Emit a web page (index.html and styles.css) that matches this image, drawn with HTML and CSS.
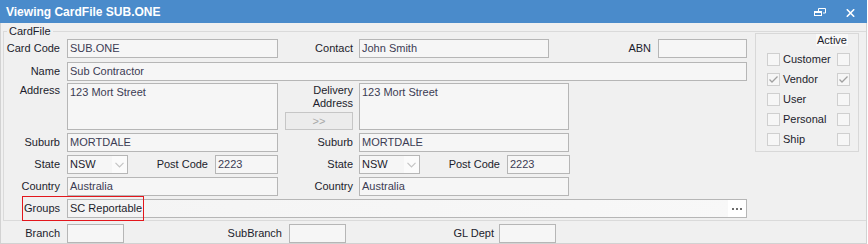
FILE: index.html
```html
<!DOCTYPE html>
<html lang="en">
<head>
  <meta charset="UTF-8" />
  <title>Viewing CardFile SUB.ONE</title>
  <link rel="stylesheet" href="styles.css">
</head>
<body>
  <div class="window">
    <!-- Title bar -->
    <div class="titlebar">
      <span class="title">Viewing CardFile SUB.ONE</span>
      <span class="tb-btn restore">
        <svg width="12" height="8" viewBox="0 0 12 8"><path d="M4.5 0.5h7v4.5h-2.5M4.5 0.5v3" fill="none" stroke="#fff"/><rect x="0.5" y="3.5" width="7" height="4" fill="none" stroke="#fff"/><path d="M0.5 4.5h7" stroke="#fff"/></svg>
      </span>
      <span class="tb-btn close">
        <svg width="9" height="8" viewBox="0 0 9 8"><path d="M0.8 0.3L8.2 7.7M8.2 0.3L0.8 7.7" stroke="#fff" stroke-width="1.6"/></svg>
      </span>
    </div>

    <!-- CardFile group -->
    <fieldset class="cardfile">
      <legend>CardFile</legend>
      <div class="cardfile-body">
        <div class="form">
          <div class="row r1">
            <label class="lbl">Card Code</label>
            <div class="field w-left">SUB.ONE</div>
            <label class="lbl lbl2">Contact</label>
            <div class="field w-contact">John Smith</div>
            <label class="lbl lbl-abn">ABN</label>
            <div class="field w-abn"></div>
          </div>
          <div class="row r2">
            <label class="lbl">Name</label>
            <div class="field w-full">Sub Contractor</div>
          </div>
          <div class="row r3">
            <label class="lbl lbl-top">Address</label>
            <div class="field memo w-left">123 Mort Street</div>
            <div class="mid">
              <label class="lbl-del">Delivery<br>Address</label>
              <button class="copy-btn">&gt;&gt;</button>
            </div>
            <div class="field memo w-right">123 Mort Street</div>
          </div>
          <div class="row r4">
            <label class="lbl">Suburb</label>
            <div class="field w-left">MORTDALE</div>
            <label class="lbl lbl2">Suburb</label>
            <div class="field w-right">MORTDALE</div>
          </div>
          <div class="row r4">
            <label class="lbl">State</label>
            <div class="field select">
              <span class="sel-text">NSW</span>
              <span class="sel-arrow"><svg width="9" height="6" viewBox="0 0 9 6"><path d="M0.5 0.8L4.5 4.8L8.5 0.8" fill="none" stroke="#c4c4c4" stroke-width="1.2"/></svg></span>
            </div>
            <label class="lbl lbl-pc">Post Code</label>
            <div class="field w-pc">2223</div>
            <label class="lbl lbl2">State</label>
            <div class="field select">
              <span class="sel-text">NSW</span>
              <span class="sel-arrow"><svg width="9" height="6" viewBox="0 0 9 6"><path d="M0.5 0.8L4.5 4.8L8.5 0.8" fill="none" stroke="#c4c4c4" stroke-width="1.2"/></svg></span>
            </div>
            <label class="lbl lbl-pc">Post Code</label>
            <div class="field w-pc">2223</div>
          </div>
          <div class="row r4">
            <label class="lbl">Country</label>
            <div class="field w-left">Australia</div>
            <label class="lbl lbl2">Country</label>
            <div class="field w-right">Australia</div>
          </div>
          <div class="row r4 groups-row">
            <label class="lbl">Groups</label>
            <div class="field w-full groups">
              <span>SC Reportable</span>
              <span class="ellipsis"><i></i><i></i><i></i></span>
            </div>
            <div class="highlight"></div>
          </div>
        </div>

        <div class="active">
          <div class="active-title"><span>Active</span></div>
          <div class="chk-row"><span class="chk"></span><span class="chk-lbl">Customer</span><span class="chk right"></span></div>
          <div class="chk-row"><span class="chk on"><svg width="11" height="11" viewBox="0 0 11 11"><path d="M1.5 5.5L4 8L9.5 2.5" fill="none" stroke="#a0a0a0" stroke-width="1.3"/></svg></span><span class="chk-lbl">Vendor</span><span class="chk right on"><svg width="11" height="11" viewBox="0 0 11 11"><path d="M1.5 5.5L4 8L9.5 2.5" fill="none" stroke="#a0a0a0" stroke-width="1.3"/></svg></span></div>
          <div class="chk-row"><span class="chk"></span><span class="chk-lbl">User</span><span class="chk right"></span></div>
          <div class="chk-row"><span class="chk"></span><span class="chk-lbl">Personal</span><span class="chk right"></span></div>
          <div class="chk-row"><span class="chk"></span><span class="chk-lbl">Ship</span><span class="chk right"></span></div>
        </div>
      </div>
    </fieldset>

    <!-- Branch row -->
    <div class="row branch-row">
      <label class="lbl">Branch</label>
      <div class="field w-branch"></div>
      <label class="lbl lbl-sub">SubBranch</label>
      <div class="field w-branch"></div>
      <label class="lbl lbl-gl">GL Dept</label>
      <div class="field w-branch"></div>
    </div>
  </div>
</body>
</html>
```

FILE: styles.css
```css
*, *::before, *::after {
  box-sizing: border-box;
}

body {
  margin: 0;
  background: #ffffff;
  font-family: "Liberation Sans", Arial, sans-serif;
  font-size: 11px;
  color: #1c1c2c;
}

/* Window frame */
.window {
  width: 867px;
  height: 244px;
  background: #f0f0f0;
  border: 1px solid #d2d2d2;
  border-top: 0;
}

.titlebar {
  height: 23px;
  margin: 0 -1px;
  background: #4a8bcb;
  display: flex;
  align-items: center;
  padding: 0 12px 0 6px;
}

.title {
  color: #ffffff;
  font-weight: bold;
  font-size: 12px;
}

.tb-btn {
  display: flex;
}

.restore {
  margin-left: auto;
  margin-top: 1px;
}

.close {
  margin-left: 20px;
  margin-top: 2px;
}

/* CardFile group box */
.cardfile {
  margin: 1px 0 0 2px;
  padding: 0 0 2px 0;
  border: 1px solid #dadada;
  border-right: 0;
  min-inline-size: 0;
}

.cardfile legend {
  margin-left: 3px;
  padding: 0 2px;
  line-height: 14px;
  font-size: 11px;
}

.cardfile-body {
  display: flex;
  align-items: flex-start;
}

.form {
  width: 743px;
}

.row {
  display: flex;
  align-items: flex-start;
  position: relative;
}

.r1 { margin-top: 1px; }
.r2 { margin-top: 4px; }
.r3 { margin-top: 2px; }
.r4 { margin-top: 3px; }

.lbl {
  width: 56px;
  margin-right: 7px;
  text-align: right;
  line-height: 19px;
  white-space: nowrap;
}

.lbl-top {
  line-height: 13px;
  padding-top: 1px;
}

.lbl2 { width: 75px; margin-right: 6px; }
.lbl-abn { width: 102px; }
.lbl-pc { width: 80px; }

.field {
  height: 19px;
  border: 1px solid #b6b6b6;
  background: #f6f6f6;
  padding: 0 2px;
  line-height: 17px;
  color: #3c3c54;
  white-space: nowrap;
  overflow: hidden;
}

.w-left { width: 211px; }
.w-right { width: 210px; }
.w-contact { width: 190px; }
.w-abn { width: 89px; }
.w-full { width: 680px; }
.w-pc { width: 63px; }
.w-branch { width: 57px; }

.memo {
  height: 47px;
  line-height: 14px;
  padding-top: 1px;
}

/* Middle column between the two address blocks */
.mid {
  width: 75px;
  margin-right: 6px;
  height: 47px;
  display: flex;
  flex-direction: column;
  align-items: flex-end;
  justify-content: space-between;
}

.lbl-del {
  text-align: right;
  line-height: 13px;
  padding-top: 1px;
}

.copy-btn {
  width: 68px;
  height: 18px;
  padding: 0;
  border: 1px solid #c6c6c6;
  background: #ececec;
  color: #a8a8a8;
  font-family: inherit;
  font-size: 11px;
  line-height: 14px;
}

/* Dropdown */
.select {
  width: 61px;
  display: flex;
  padding-right: 0;
}

.sel-text {
  flex: 1;
  color: #1c1c2c;
}

.sel-arrow {
  width: 15px;
  background: #fbfbfb;
  display: flex;
  align-items: center;
  justify-content: center;
  padding-top: 1px;
}

/* Groups lookup */
.groups {
  display: flex;
  padding-right: 0;
  background: linear-gradient(90deg, #f4f4f4, #f8f8f8);
}

.groups span:first-child {
  flex: 1;
  color: #1c1c2c;
}

.ellipsis {
  width: 18px;
  background: #ffffff;
  display: flex;
  align-items: center;
  justify-content: center;
  gap: 2px;
  padding-top: 1px;
}

.ellipsis i {
  width: 2px;
  height: 2px;
  background: #6e6e6e;
}

.highlight {
  position: absolute;
  left: 18px;
  top: -3px;
  width: 122px;
  height: 25px;
  border: 1px solid #e3161c;
}

/* Active group */
.active {
  width: 104px;
  height: 119px;
  margin: -5px 0 0 8px;
  border: 1px solid #d8d8d8;
  padding: 0 8px 0 11px;
}

.active-title {
  text-align: right;
  line-height: 12px;
  padding-right: 2px;
  margin-bottom: 3px;
}

.active-title span {
  background: #f8f8f8;
  padding: 0 1px;
}

.chk-row {
  display: flex;
  align-items: center;
  height: 20px;
}

.chk {
  width: 13px;
  height: 13px;
  border: 1px solid #cfcfcf;
  background: #f6f6f6;
  display: flex;
  align-items: center;
  justify-content: center;
}

.chk-lbl {
  margin-left: 3px;
}

.chk.right {
  margin-left: auto;
}

/* Bottom row */
.branch-row {
  margin-top: 3px;
  padding-left: 3px;
}

.lbl-sub { width: 158px; }
.lbl-gl { width: 148px; margin-right: 5px; }
```
